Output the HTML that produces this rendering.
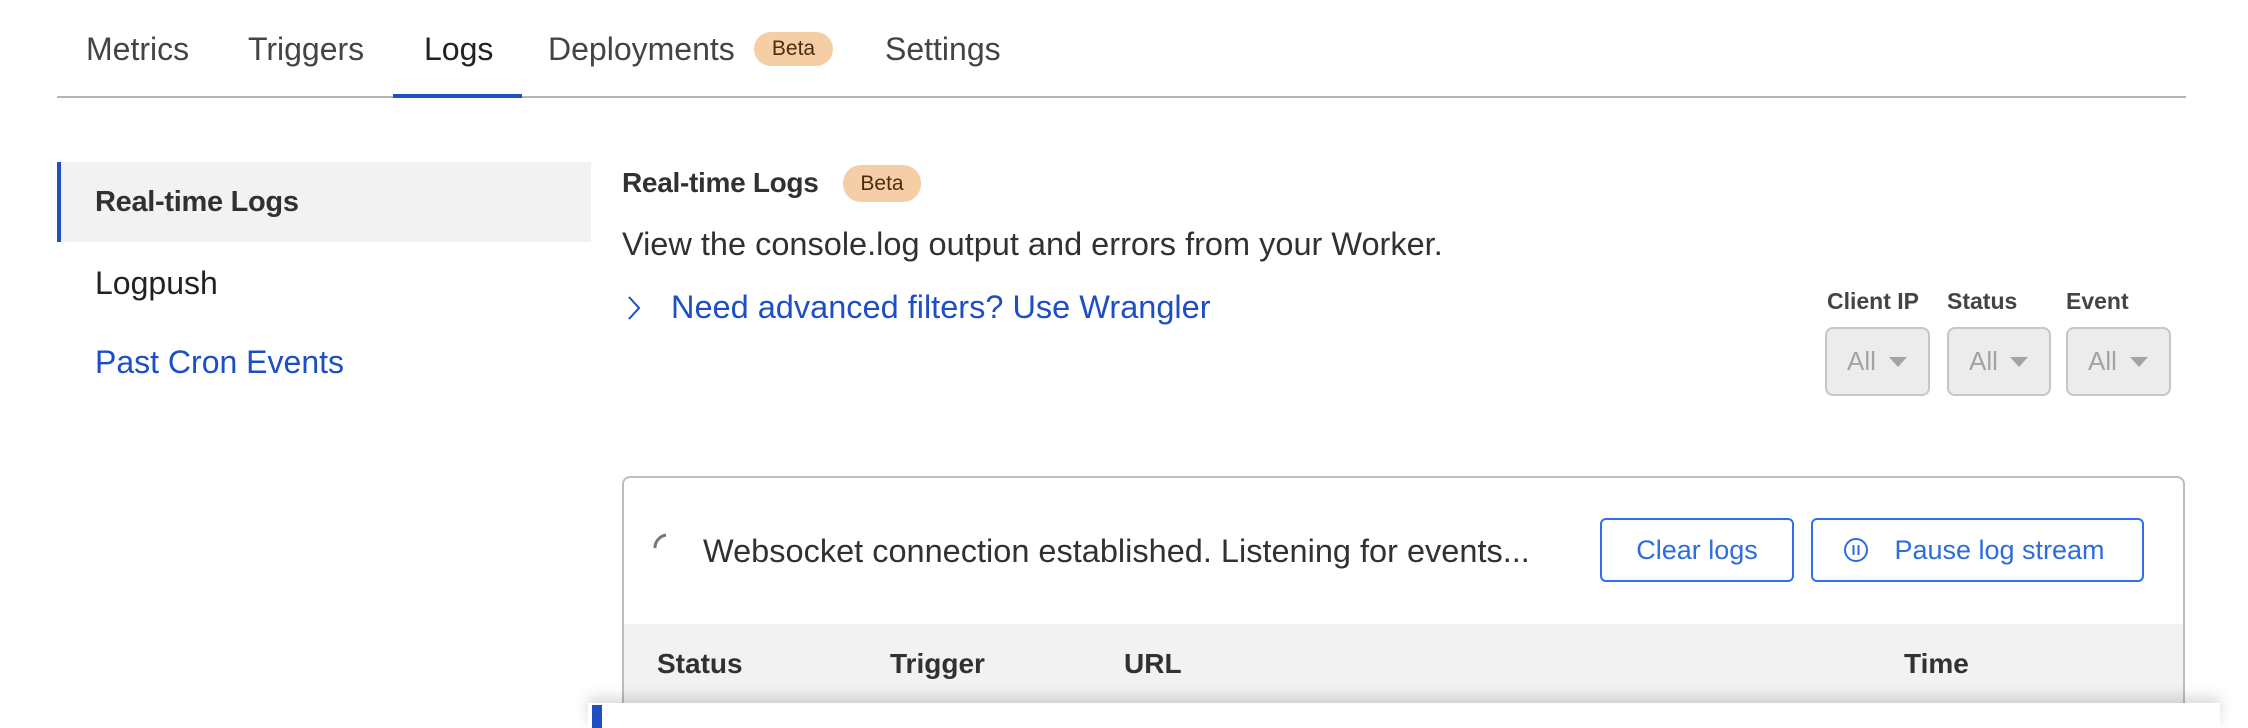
<!DOCTYPE html>
<html style="width:2248px;height:728px;overflow:hidden"><head><meta charset="utf-8"><style>
*{margin:0;padding:0;box-sizing:border-box}
body{width:2248px;height:728px;overflow:hidden;background:#fff;font-family:"Liberation Sans",sans-serif;color:#313131;position:relative}
.a{position:absolute;white-space:nowrap}
.tab{font-size:32px;color:#444;top:31px}
.badge{position:absolute;background:#f5cea5;color:#4a2d10;border-radius:18px;font-size:21px;text-align:center}
.sel{position:absolute;top:327px;height:69px;background:#ececec;border:2px solid #c6c6c6;border-radius:8px;color:#a3a3a3;font-size:26px;line-height:65px;padding-left:20px}
.sel:after{content:"";position:absolute;right:21px;top:28px;border-left:9px solid transparent;border-right:9px solid transparent;border-top:10px solid #a3a3a3}
.lbl{font-size:23px;font-weight:bold;color:#444;top:288px}
.btn{position:absolute;top:518px;height:64px;border:2px solid #2f6fec;border-radius:6px;color:#2d6cdf;font-size:27px;line-height:60px;text-align:center}
.th{font-size:28px;font-weight:bold;color:#313131;top:648px}
</style></head><body>
<div class="a tab" style="left:86px">Metrics</div>
<div class="a tab" style="left:248px">Triggers</div>
<div class="a tab" style="left:424px;color:#222">Logs</div>
<div class="a tab" style="left:548px">Deployments</div>
<div class="badge" style="left:754px;top:32px;width:79px;height:34px;line-height:34px">Beta</div>
<div class="a tab" style="left:885px">Settings</div>
<div class="a" style="left:57px;top:96px;width:2129px;height:2px;background:#b5b5b5"></div>
<div class="a" style="left:393px;top:94px;width:129px;height:4px;background:#1f4fc1"></div>

<div class="a" style="left:57px;top:162px;width:534px;height:80px;background:#f2f2f2;border-left:4px solid #1f4fc1"></div>
<div class="a" style="left:95px;top:186px;font-size:29px;font-weight:bold;color:#313131;letter-spacing:-0.3px">Real-time Logs</div>
<div class="a" style="left:95px;top:265px;font-size:32px;color:#222">Logpush</div>
<div class="a" style="left:95px;top:344px;font-size:32px;color:#1d4ec5">Past Cron Events</div>

<div class="a" style="left:622px;top:167px;font-size:28px;font-weight:bold;color:#313131;letter-spacing:-0.3px">Real-time Logs</div>
<div class="badge" style="left:843px;top:165px;width:78px;height:37px;line-height:37px">Beta</div>
<div class="a" style="left:622px;top:226px;font-size:32.5px;color:#313131">View the console.log output and errors from your Worker.</div>
<svg class="a" style="left:626px;top:295px" width="16" height="26"><path d="M3 2 L13 13 L3 24" fill="none" stroke="#1d4ec5" stroke-width="2"/></svg>
<div class="a" style="left:671px;top:289px;font-size:32.5px;color:#1d4ec5">Need advanced filters? Use Wrangler</div>

<div class="a lbl" style="left:1827px">Client IP</div>
<div class="a lbl" style="left:1947px">Status</div>
<div class="a lbl" style="left:2066px">Event</div>
<div class="sel" style="left:1825px;width:105px">All</div>
<div class="sel" style="left:1947px;width:104px">All</div>
<div class="sel" style="left:2066px;width:105px">All</div>

<div class="a" style="left:622px;top:476px;width:1563px;height:252px;border:2px solid #bdbdbd;border-bottom:none;border-radius:8px 8px 0 0;overflow:hidden">
 <div class="a" style="left:0;top:146px;width:100%;height:200px;background:#f2f2f2"></div>
</div>
<svg class="a" style="left:652px;top:530px" width="22" height="22"><path d="M3 18 A13 13 0 0 1 14 5" fill="none" stroke="#777" stroke-width="3"/></svg>
<div class="a" style="left:703px;top:533px;font-size:32.5px;color:#313131">Websocket connection established. Listening for events...</div>
<div class="btn" style="left:1600px;width:194px">Clear logs</div>
<div class="btn" style="left:1811px;width:333px;padding-left:44px">Pause log stream</div>
<svg class="a" style="left:1843px;top:537px" width="26" height="26"><circle cx="13" cy="13" r="11" fill="none" stroke="#2d6cdf" stroke-width="2"/><path d="M10.5 8v10M15.5 8v10" stroke="#2d6cdf" stroke-width="2"/></svg>
<div class="a th" style="left:657px">Status</div>
<div class="a th" style="left:890px">Trigger</div>
<div class="a th" style="left:1124px">URL</div>
<div class="a th" style="left:1904px">Time</div>

<div class="a" style="left:588px;top:703px;width:1632px;height:25px;background:#fff;box-shadow:0 -6px 14px rgba(0,0,0,0.15)"></div>
<div class="a" style="left:592px;top:705px;width:10px;height:23px;background:#1f4fc1"></div>
</body></html>
